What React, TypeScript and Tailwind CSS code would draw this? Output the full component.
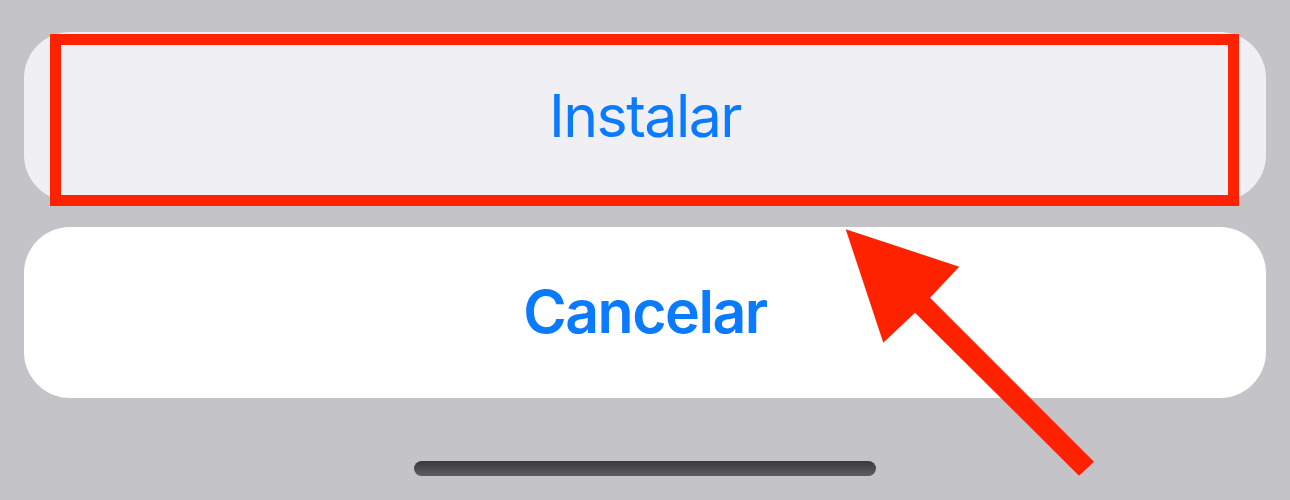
export default function App() {
  return (
    <div className="relative w-[1290px] h-[500px] overflow-hidden bg-[#c4c3c8] font-['Inter',sans-serif]">
      <div className="flex flex-col gap-[26px] px-[24px] pt-[32px]">
        <button className="h-[169px] w-full rounded-[46px] bg-[#efeff4] text-[59px] font-normal text-[#0a7aff] tracking-[-1.5px]">
          Instalar
        </button>
        <button className="h-[171px] w-full rounded-[46px] bg-white text-[59px] font-semibold text-[#0a7aff] tracking-[-1.5px]">
          Cancelar
        </button>
      </div>
      <div className="flex justify-center pt-[63px]">
        <div className="h-[15px] w-[462px] rounded-full bg-gradient-to-b from-[#3a3a3d] to-[#5e5e62]" />
      </div>

      {/* annotation overlay */}
      <div className="absolute left-[50px] top-[34px] h-[172px] w-[1189px] border-[11px] border-[#ff2200]" />
      <svg className="absolute left-0 top-0" width="1290" height="500" viewBox="0 0 1290 500">
        <polygon
          points="845.7,229.3 959.3,266.7 930,297.7 1094,461.7 1079,475.7 915,312.7 883.3,342.7"
          fill="#ff2200"
        />
      </svg>
    </div>
  );
}
